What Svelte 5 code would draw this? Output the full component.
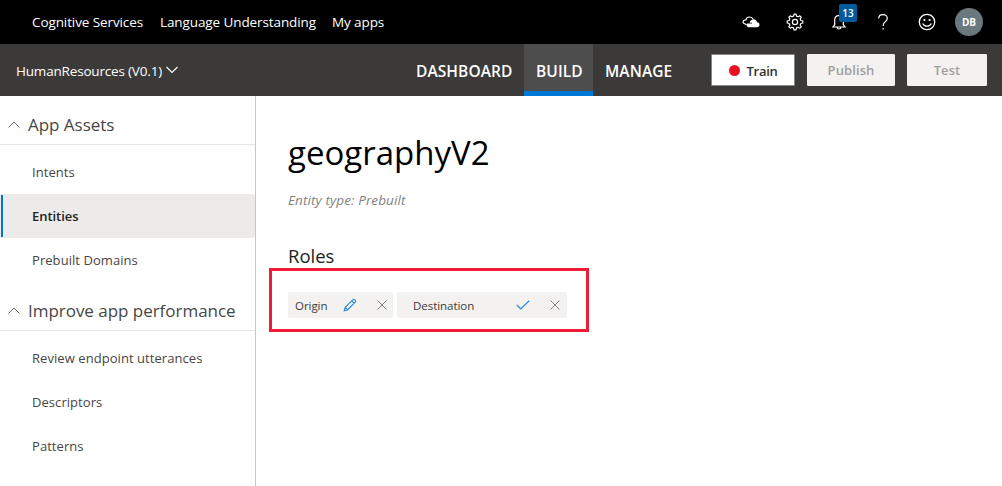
<script>
  const sections = [
    { title: 'App Assets', items: ['Intents', 'Entities', 'Prebuilt Domains'] },
    { title: 'Improve app performance', items: ['Review endpoint utterances', 'Descriptors', 'Patterns'] }
  ];
  let active = $state('Entities');
</script>

<header class="top">
  <nav class="crumbs">
    <span>Cognitive Services</span>
    <span>Language Understanding</span>
    <span>My apps</span>
  </nav>
  <div class="tools">
    <svg class="cloud" width="18" height="14" viewBox="0 0 18 14">
      <path d="M4.500 9.700 1.800 8.300C.7 7.500.8 5.700 2.600 5.200l1.300-.3C4.300 3 5.800 2 7.600 2c1.600 0 2.900.8 3.500 2.200" fill="none" stroke="#fff" stroke-width="1.200" />
      <path d="M6.500 12.200a2.200 2.200 0 0 1-1.500-3.600h5V7.700H7.600C8.200 5.500 9.700 4.300 11.500 4.300c1.900 0 3.200 1.200 3.600 2.900 1.500.1 2.400 1.100 2.400 2.500s-1 2.500-2.500 2.500z" fill="#fff" />
    </svg>
    <svg class="gear" width="18" height="18" viewBox="0 0 18 18" fill="none" stroke="#fff" stroke-width="1.200" stroke-linejoin="round">
      <path d="M7.500 3.100 8 1.200h2l.5 1.900 1.600.7 1.700-1 1.400 1.400-1 1.700.7 1.600 1.900.5v2l-1.900.5-.7 1.600 1 1.700-1.400 1.400-1.700-1-1.600.7-.5 1.900H8l-.5-1.900-1.600-.7-1.700 1-1.400-1.400 1-1.700-.7-1.600L1.200 10V8l1.900-.5.7-1.600-1-1.700 1.400-1.400 1.700 1z" />
      <circle cx="9" cy="9" r="2.600" />
    </svg>
    <div class="bell">
      <svg width="14" height="17" viewBox="0 0 14 17" fill="none" stroke="#fff" stroke-width="1.200">
        <path d="M1 13h12l-1.700-2.300V6.200C11.300 3.400 9.400 1.600 7 1.600S2.700 3.400 2.700 6.200v4.500zM5.200 13.200a1.800 1.800 0 0 0 3.600 0" />
      </svg>
      <b class="badge">13</b>
    </div>
    <svg class="help" width="12" height="18" viewBox="0 0 12 18" fill="none" stroke="#fff" stroke-width="1.200">
      <path d="M1.700 5.400C1.700 3 3.400 1.600 6 1.600s4.300 1.500 4.300 3.700c0 3.200-4.100 3.600-4.100 6.900v.9M6.200 15v1.600" />
    </svg>
    <svg class="smile" width="18" height="18" viewBox="0 0 18 18">
      <circle cx="9" cy="9" r="7.700" fill="none" stroke="#fff" stroke-width="1.300" />
      <circle cx="6.400" cy="7" r="1.100" fill="#fff" /><circle cx="11.600" cy="7" r="1.100" fill="#fff" />
      <path d="M4.700 10.500c.8 1.700 2.300 2.700 4.300 2.700s3.500-1 4.300-2.700" fill="none" stroke="#fff" stroke-width="1.300" />
    </svg>
    <div class="avatar">DB</div>
  </div>
</header>

<div class="appbar">
  <div class="appname"><span>HumanResources (V0.1)</span>
    <svg width="12" height="8" viewBox="0 0 12 8"><path d="M.5 1 6 6.500 11.500 1" fill="none" stroke="#fff" stroke-width="1.100" /></svg>
  </div>
  <nav class="tabs">
    <span class="dash">DASHBOARD</span>
    <span class="build">BUILD</span>
    <span class="manage">MANAGE</span>
  </nav>
  <div class="actions">
    <button class="train"><i></i><span>Train</span></button>
    <button class="publish" disabled>Publish</button>
    <button class="test" disabled>Test</button>
  </div>
</div>

<div class="body">
  <aside>
    {#each sections as s}
      <section>
        <h2>
          <svg width="12" height="8" viewBox="0 0 12 8"><path d="M.5 6.500 6 1l5.500 5.500" fill="none" stroke="#605e5c" stroke-width=".9" /></svg>
          <span>{s.title}</span>
        </h2>
        <ul>
          {#each s.items as item}
            <li class:active={item === active}>{item}</li>
          {/each}
        </ul>
      </section>
    {/each}
  </aside>
  <main>
    <h1>geographyV2</h1>
    <p>Entity type: Prebuilt</p>
    <h3>Roles</h3>
    <div class="frame">
      <div class="chip origin">
        <span>Origin</span>
        <svg width="14" height="14" viewBox="0 0 14 14" fill="none" stroke="#2b88d8" stroke-width="1.100">
          <path d="M1.200 12.800 2 9.600 9.800 1.800c.6-.6 1.500-.6 2.100 0l.3.300c.6.6.6 1.500 0 2.100L4.400 12zM2 9.600c1.300.2 2.200 1.100 2.400 2.400M8.700 2.900l2.400 2.400" />
        </svg>
        <svg width="10" height="10" viewBox="0 0 10 10"><path d="m.5.5 9 9m0-9-9 9" stroke="#797775" stroke-width=".9" /></svg>
      </div>
      <div class="chip destination">
        <span>Destination</span>
        <svg width="14" height="10" viewBox="0 0 14 10"><path d="m.8 5 4 4L13.200.8" fill="none" stroke="#2b88d8" stroke-width="1.200" /></svg>
        <svg width="10" height="10" viewBox="0 0 10 10"><path d="m.5.5 9 9m0-9-9 9" stroke="#797775" stroke-width=".9" /></svg>
      </div>
    </div>
  </main>
</div>

<style>
  :global(body) { background: #fff; overflow: hidden; }
  :global(#app) { font-family: "Open Sans", "Noto Sans", sans-serif; font-size: 13px; height: 486px; display: flex; flex-direction: column; }
  * { box-sizing: border-box; white-space: nowrap; }
  svg { display: block; flex: none; }
  h1, h2, h3, p, ul { margin: 0; padding: 0; font-weight: 400; }
  .top { height: 44px; flex: none; background: #000; color: #fff; display: flex; justify-content: space-between; align-items: center; padding: 0 19px 0 32px; }
  .crumbs { display: grid; grid-template-columns: 128px 172px 60px; font-size: 13.500px; letter-spacing: -.1px; }
  .tools { display: flex; align-items: center; }
  .gear { margin-left: 26px; }
  .bell { position: relative; margin-left: 28px; }
  .badge { position: absolute; left: 7px; top: -10px; width: 18px; height: 18px; background: #005a9e; border-radius: 2px; font-size: 10px; line-height: 18px; font-weight: 600; text-align: center; }
  .help { margin-left: 31px; }
  .smile { margin-left: 29px; }
  .avatar { width: 28px; height: 28px; margin-left: 19px; border-radius: 50%; background: #69797e; font-size: 10px; font-weight: 700; line-height: 28px; text-align: center; }
  .appbar { height: 52px; flex: none; background: #3b3a39; color: #fff; display: flex; align-items: center; padding: 0 15px 0 16px; }
  .appname { width: 388px; display: flex; align-items: center; gap: 4px; font-size: 13.500px; letter-spacing: -.18px; }
  .appname span { padding-top: 2px; }
  .tabs { display: flex; height: 52px; line-height: 55px; font-size: 15.500px; letter-spacing: .08px; font-weight: 600; }
  .tabs span { padding-left: 12px; }
  .dash { width: 120px; }
  .build { width: 69px; background: #4d4d4d; border-bottom: 5px solid #0078d4; }
  .manage { width: 118px; }
  .actions { display: flex; gap: 12px; }
  button { height: 32px; margin: 0; padding: 0; border: 1px solid #f3f2f1; border-radius: 1px; background: #f3f2f1; color: #a19f9d; font: 600 13px "Open Sans", sans-serif; letter-spacing: .1px; }
  .train { width: 84px; background: #fff; border-color: #8a8886; color: #323130; display: flex; align-items: center; justify-content: center; gap: 7px; letter-spacing: -.3px; }
  .train span { padding-top: 2px; }
  .train i { width: 11px; height: 11px; border-radius: 50%; background: #e81123; }
  .publish { width: 88px; }
  .test { width: 80px; }
  .body { display: flex; flex: 1; }
  aside { width: 256px; border-right: 1px solid #c8c6c4; }
  h2 { height: 49px; padding: 9px 0 0 8px; display: flex; align-items: center; gap: 8px; border-bottom: 1px solid #e6e6e6; font-size: 17px; letter-spacing: -.03px; color: #484644; }
  ul { list-style: none; padding-top: 5px; }
  li { height: 44px; padding-left: 31px; line-height: 44px; color: #484644; margin-left: 1px; font-size: 13px; letter-spacing: .06px; }
  li.active { background: #edebe9; margin-left: 0; padding-left: 32px; font-weight: 600; letter-spacing: -.05px; color: #201f1e; position: relative; border-radius: 0 2px 2px 0; }
  li.active::before { content: ""; position: absolute; left: 1px; top: 1px; width: 2px; height: 42px; background: #0078d4; }
  main { flex: 1; padding-left: 13px; }
  h1 { padding: 34px 0 0 19px; font-size: 33px; line-height: 46px; color: #000; }
  p { padding: 14px 0 0 19px; font-size: 13.500px; letter-spacing: .1px; line-height: 20px; font-style: italic; color: #848280; }
  h3 { padding: 34px 0 0 19px; font-size: 18.500px; line-height: 24px; color: #201f1e; }
  .frame { width: 320px; height: 64px; border: 3px solid #ee1c36; padding: 21px 0 0 16px; display: flex; gap: 4px; }
  .chip { height: 26px; background: #f3f2f1; border-radius: 2px; display: flex; align-items: center; font-size: 11.500px; letter-spacing: -.05px; color: #3b3a39; }
  .chip span { padding-top: 1px; }
  .origin { width: 105px; padding-left: 7px; }
  .origin span { width: 48px; }
  .origin svg + svg { margin-left: 20px; }
  .destination { width: 170px; padding-left: 16px; }
  .destination span { width: 103px; }
  .destination svg + svg { margin-left: 20px; }
</style>
